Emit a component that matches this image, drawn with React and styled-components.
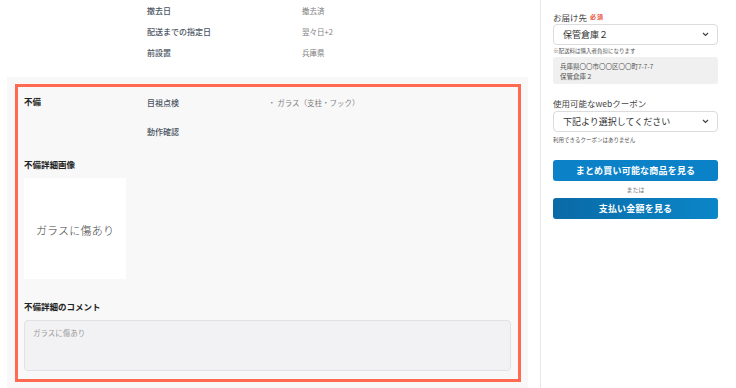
import React from "react";
import styled, { createGlobalStyle } from "styled-components";

const Global = createGlobalStyle`
  html, body { margin: 0; padding: 0; background: #fff; }
  body { font-family: "Noto Sans CJK JP", "Noto Sans", sans-serif; color: #333; }
  * { box-sizing: border-box; }
`;

const Page = styled.div`
  display: flex;
  width: 736px;
  height: 388px;
  overflow: hidden;
`;

const Main = styled.div`
  width: 540px;
  flex: none;
  display: flex;
  flex-direction: column;
`;

const InfoList = styled.div`
  display: grid;
  grid-template-columns: 147px 155px 1fr;
  grid-auto-rows: 21px;
  padding-bottom: 14px;
`;

const InfoLabel = styled.div`
  grid-column: 2;
  font-size: 8px;
  line-height: 21px;
  color: #4b5563;
  font-weight: 500;
`;

const InfoValue = styled.div`
  font-size: 7.5px;
  line-height: 21px;
  color: #808080;
`;

const GrayPanel = styled.div`
  margin: 0 12px 0 7px;
  background: #f8f8f8;
  padding: 7px 7px 5px 8px;
  flex: 1;
`;

const Highlight = styled.div`
  border: 3px solid #ff6a50;
  padding: 8px 7px 8px 6px;
  display: flex;
  flex-direction: column;
`;

const CheckGrid = styled.div`
  display: grid;
  grid-template-columns: 123px 121px 1fr;
  grid-auto-rows: 29px;
`;

const SectionTitle = styled.div`
  font-size: 8.5px;
  line-height: 12px;
  font-weight: 700;
  color: #222;
  margin-top: ${(p) => p.$mt || 0}px;
`;

const CheckLabel = styled.div`
  grid-column: 2;
  font-size: 8px;
  line-height: 16px;
  color: #4b5563;
  font-weight: 500;
`;

const CheckValue = styled.div`
  font-size: 7.5px;
  line-height: 16px;
  color: #808080;
`;

const ImageBox = styled.div`
  margin-top: 8px;
  width: 102px;
  height: 101px;
  background: #fff;
  display: flex;
  align-items: center;
  justify-content: center;
  padding-top: 2px;
  font-size: 11px;
  font-weight: 300;
  color: #444;
  letter-spacing: 0.2px;
`;

const Comment = styled.div`
  margin-top: 8px;
  height: 51px;
  width: 487px;
  background: #f2f2f4;
  border: 1px solid #e2e2e4;
  border-radius: 4px;
  padding: 6px 8px;
  font-size: 7.5px;
  line-height: 12px;
  color: #9a9a9a;
`;

const Sidebar = styled.div`
  flex: 1;
  border-left: 1px solid #e8e8e8;
  padding: 11px 18px 0 12px;
  display: flex;
  flex-direction: column;
`;

const FieldLabel = styled.div`
  font-size: 8.5px;
  line-height: 12px;
  color: #444;
  margin-top: ${(p) => p.$mt || 0}px;
  display: flex;
  align-items: center;
  gap: 3px;
`;

const Required = styled.span`
  font-size: 6px;
  color: #e8503a;
  font-weight: 700;
  letter-spacing: 1px;
`;

const Select = styled.div`
  margin-top: ${(p) => p.$mt || 0}px;
  height: 21px;
  border: 1px solid #dcdcdc;
  border-radius: 4px;
  background: #fff;
  display: flex;
  align-items: center;
  justify-content: space-between;
  padding: 0 8px 0 9px;
  font-size: 9px;
  color: #333;
`;

const Note = styled.div`
  margin-top: ${(p) => p.$mt || 0}px;
  font-size: 5.5px;
  line-height: 8px;
  color: #555;
`;

const AddressBox = styled.div`
  margin-top: 2px;
  height: 27px;
  background: #f0f0f0;
  border-radius: 3px;
  padding: 4px 7px;
  font-size: 6.5px;
  line-height: 10px;
  color: #555;
`;

const Button = styled.div`
  margin-top: ${(p) => p.$mt || 0}px;
  height: 21px;
  border-radius: 3px;
  background: ${(p) =>
    p.$dark
      ? "linear-gradient(90deg, #0a6aa6 0%, #0b86c8 100%)"
      : "#0b82c8"};
  color: #fff;
  font-size: 9px;
  font-weight: 700;
  display: flex;
  align-items: center;
  justify-content: center;
  letter-spacing: 0.2px;
`;

const Or = styled.div`
  margin-top: 4px;
  font-size: 6px;
  line-height: 9px;
  color: #777;
  text-align: center;
`;

const Chevron = () => (
  <svg width="7" height="5" viewBox="0 0 7 5">
    <path d="M1 1 L3.5 3.5 L6 1" fill="none" stroke="#444" strokeWidth="1.2" />
  </svg>
);

export default function App() {
  return (
    <Page>
      <Global />
      <Main>
        <InfoList>
          <InfoLabel>撤去日</InfoLabel>
          <InfoValue>撤去済</InfoValue>
          <InfoLabel>配送までの指定日</InfoLabel>
          <InfoValue>翌々日+2</InfoValue>
          <InfoLabel>前設置</InfoLabel>
          <InfoValue>兵庫県</InfoValue>
        </InfoList>
        <GrayPanel>
          <Highlight>
            <CheckGrid>
              <SectionTitle>不備</SectionTitle>
              <CheckLabel>目視点検</CheckLabel>
              <CheckValue>・ ガラス（支柱・フック）</CheckValue>
              <CheckLabel>動作確認</CheckLabel>
            </CheckGrid>
            <SectionTitle $mt={5}>不備詳細画像</SectionTitle>
            <ImageBox>ガラスに傷あり</ImageBox>
            <SectionTitle $mt={21}>不備詳細のコメント</SectionTitle>
            <Comment>ガラスに傷あり</Comment>
          </Highlight>
        </GrayPanel>
      </Main>
      <Sidebar>
        <FieldLabel>
          お届け先<Required>必須</Required>
        </FieldLabel>
        <Select $mt={1}>
          保管倉庫２
          <Chevron />
        </Select>
        <Note $mt={2}>※配送料は購入者負担になります</Note>
        <AddressBox>
          兵庫県〇〇市〇〇区〇〇町7-7-7
          <br />
          保管倉庫２
        </AddressBox>
        <FieldLabel $mt={13}>使用可能なwebクーポン</FieldLabel>
        <Select $mt={2}>
          下記より選択してください
          <Chevron />
        </Select>
        <Note $mt={4}>利用できるクーポンはありません</Note>
        <Button $mt={16}>まとめ買い可能な商品を見る</Button>
        <Or>または</Or>
        <Button $mt={4} $dark>
          支払い金額を見る
        </Button>
      </Sidebar>
    </Page>
  );
}
